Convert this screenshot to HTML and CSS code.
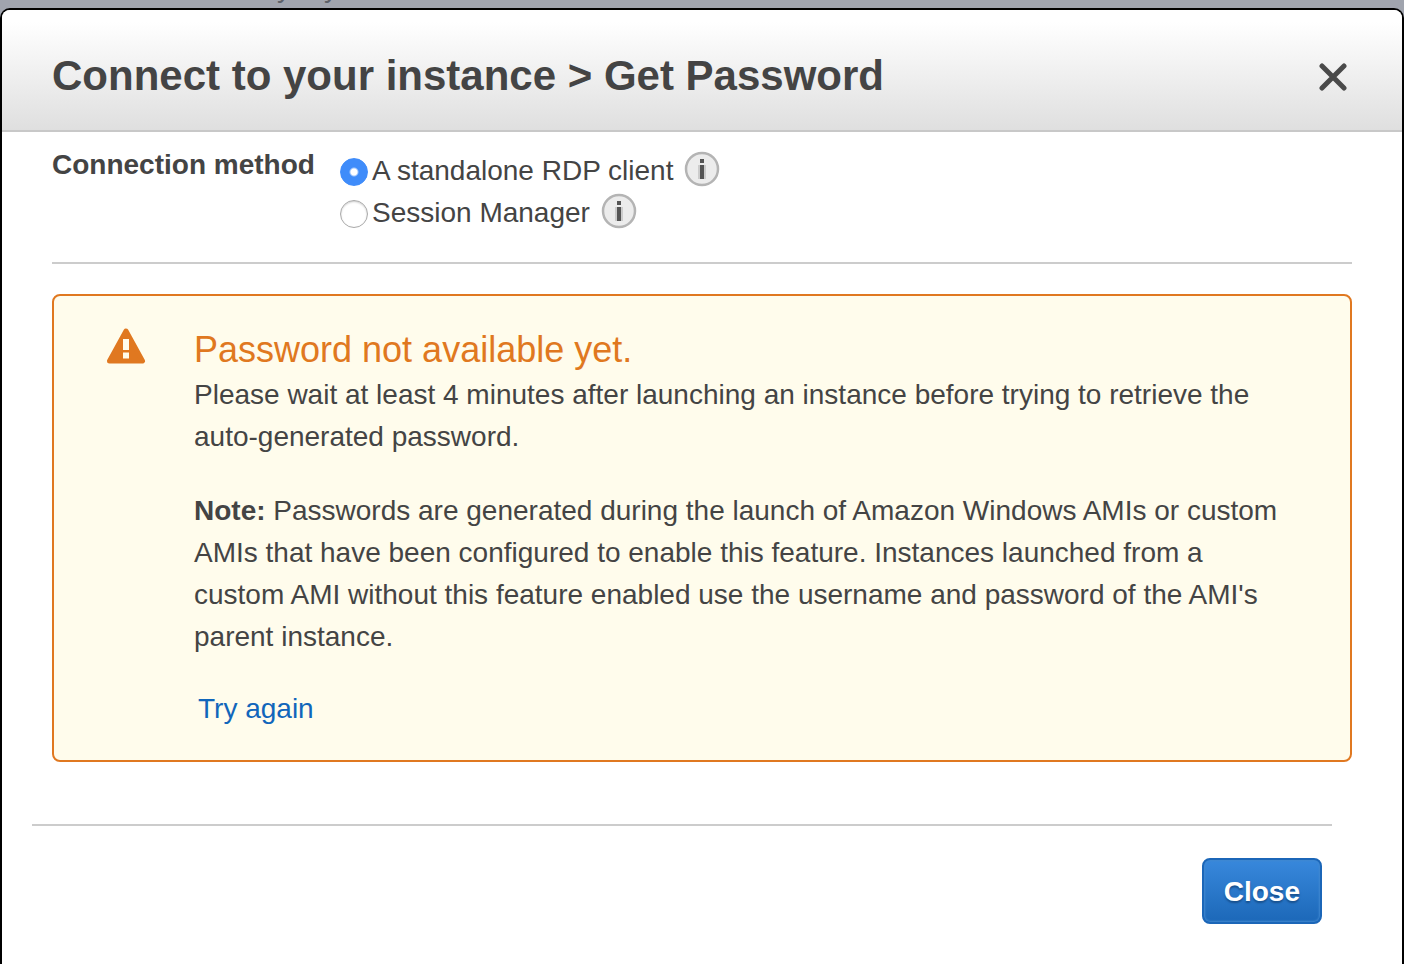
FILE: index.html
```html
<!DOCTYPE html>
<html lang="en">
<head>
<meta charset="utf-8">
<title>Connect to your instance</title>
<link rel="stylesheet" href="styles.css">
</head>
<body>
<div class="backdrop" aria-hidden="true"><span>y</span><span>y</span></div>
<main class="dialog" role="dialog" aria-labelledby="title">
  <header class="header">
    <h1 class="title" id="title">Connect to your instance &gt; Get Password</h1>
    <button class="dismiss" type="button" aria-label="Close dialog">
      <svg width="28" height="28" viewBox="0 0 28 28"><path d="M3 3 25 25M25 3 3 25" stroke="#4a4a4a" stroke-width="5" stroke-linecap="round"/></svg>
    </button>
  </header>
  <div class="content">
    <fieldset class="method">
      <legend class="legend">Connection method</legend>
      <div class="options">
        <div class="option">
          <input class="radio" type="radio" name="method" id="rdp" checked>
          <label for="rdp">A standalone RDP client</label>
          <svg class="info" width="36" height="36" viewBox="0 0 36 36"><circle cx="18" cy="18" r="16" fill="#ececec" stroke="#b4b4b4" stroke-width="2.500"/><path d="M14 14h8v14h-8z" fill="#ccc"/><path d="M16 8h4v4h-4zM16 14h4v14h-4z" fill="#555"/></svg>
        </div>
        <div class="option">
          <input class="radio" type="radio" name="method" id="ssm">
          <label for="ssm">Session Manager</label>
          <svg class="info" width="36" height="36" viewBox="0 0 36 36"><circle cx="18" cy="18" r="16" fill="#ececec" stroke="#b4b4b4" stroke-width="2.500"/><path d="M14 14h8v14h-8z" fill="#ccc"/><path d="M16 8h4v4h-4zM16 14h4v14h-4z" fill="#555"/></svg>
        </div>
      </div>
    </fieldset>
    <section class="alert">
      <svg class="warning" width="40" height="36" viewBox="0 0 40 36"><path d="M20 3 36.500 33H3.500z" fill="#e07820" stroke="#e07820" stroke-width="5" stroke-linejoin="round"/><path d="M17 11h6v11h-6zM17 24.500h6v6h-6z" fill="#fffcec"/></svg>
      <div class="message">
        <h2 class="heading">Password not available yet.</h2>
        <p class="text">Please wait at least 4 minutes after launching an instance before trying to retrieve the<br>auto-generated password.</p>
        <p class="text note"><strong>Note:</strong> Passwords are generated during the launch of Amazon Windows AMIs or custom<br>AMIs that have been configured to enable this feature. Instances launched from a<br>custom AMI without this feature enabled use the username and password of the AMI's<br>parent instance.</p>
        <a class="retry" href="#">Try again</a>
      </div>
    </section>
  </div>
  <footer class="footer"><button class="close" type="button">Close</button></footer>
</main>
</body>
</html>
```
FILE: styles.css
```css
* { box-sizing: border-box; }
body {
  margin: 0;
  background: #a0a4ae;
  color: #444;
  font: 28px/42px "Liberation Sans", Arial, sans-serif;
}
.backdrop {
  display: flex;
  align-items: flex-end;
  gap: 33px;
  height: 8px;
  padding: 0 0 6px 277px;
  overflow: hidden;
  color: #5c6068;
  line-height: 28px;
}
.dialog {
  min-height: calc(100vh - 8px);
  border: 2px solid #000;
  border-bottom: 0;
  border-radius: 10px 10px 0 0;
  background: #fff;
  overflow: hidden;
}
.header {
  display: flex;
  align-items: center;
  justify-content: space-between;
  height: 122px;
  padding: 12px 55px 0 50px;
  border-bottom: 2px solid #c8c8c8;
  background: linear-gradient(#fff 10%, #dfdfdf);
}
.title { margin: 0; font-size: 42px; line-height: 50px; }
.dismiss { display: flex; padding: 2px 0 0; border: 0; background: none; }
.content { padding: 0 50px; }
.method {
  display: flex;
  margin: 0;
  padding: 18px 0 28px;
  border: 0;
  border-bottom: 2px solid #ccc;
}
.legend { float: left; width: 288px; padding: 0; font-weight: bold; line-height: 30px; }
.option { display: flex; align-items: center; height: 42px; }
.radio {
  appearance: none;
  width: 28px;
  height: 28px;
  margin: 1px 4px 0 0;
  border: 1px solid #aaa;
  border-radius: 50%;
  background: #fff;
  box-shadow: inset 0 1px 2px #ccc;
}
.radio:checked {
  border-color: #3f8cfa;
  background: radial-gradient(circle, #fff 3px, #3f8cfa 5px);
  box-shadow: none;
}
.info { margin: 0 0 4px 11px; }
.alert {
  display: flex;
  gap: 48px;
  margin-top: 30px;
  padding: 32px 52px 30px;
  border: 2px solid #e07820;
  border-radius: 8px;
  background: #fffcec;
}
.warning { flex: none; }
.heading { margin: 0 0 2px; color: #e07820; font-size: 36px; font-weight: normal; line-height: 44px; }
.text { margin: 0; }
.note { margin: 32px 0 30px; }
.retry { margin-left: 4px; color: #1166bb; text-decoration: none; }
.footer {
  display: flex;
  justify-content: flex-end;
  margin: 62px 70px 0 30px;
  padding: 32px 10px 40px;
  border-top: 2px solid #ccc;
}
.close {
  height: 66px;
  padding: 2px 20px 0;
  border: 2px solid #1b66b8;
  border-radius: 8px;
  background: linear-gradient(#3888dc, #1c68b8);
  box-shadow: inset 0 0 2px 1px #4088d0;
  color: #fff;
  font: bold 28px/40px "Liberation Sans", Arial, sans-serif;
  text-shadow: 0 2px 2px #174f8c;
}
```
